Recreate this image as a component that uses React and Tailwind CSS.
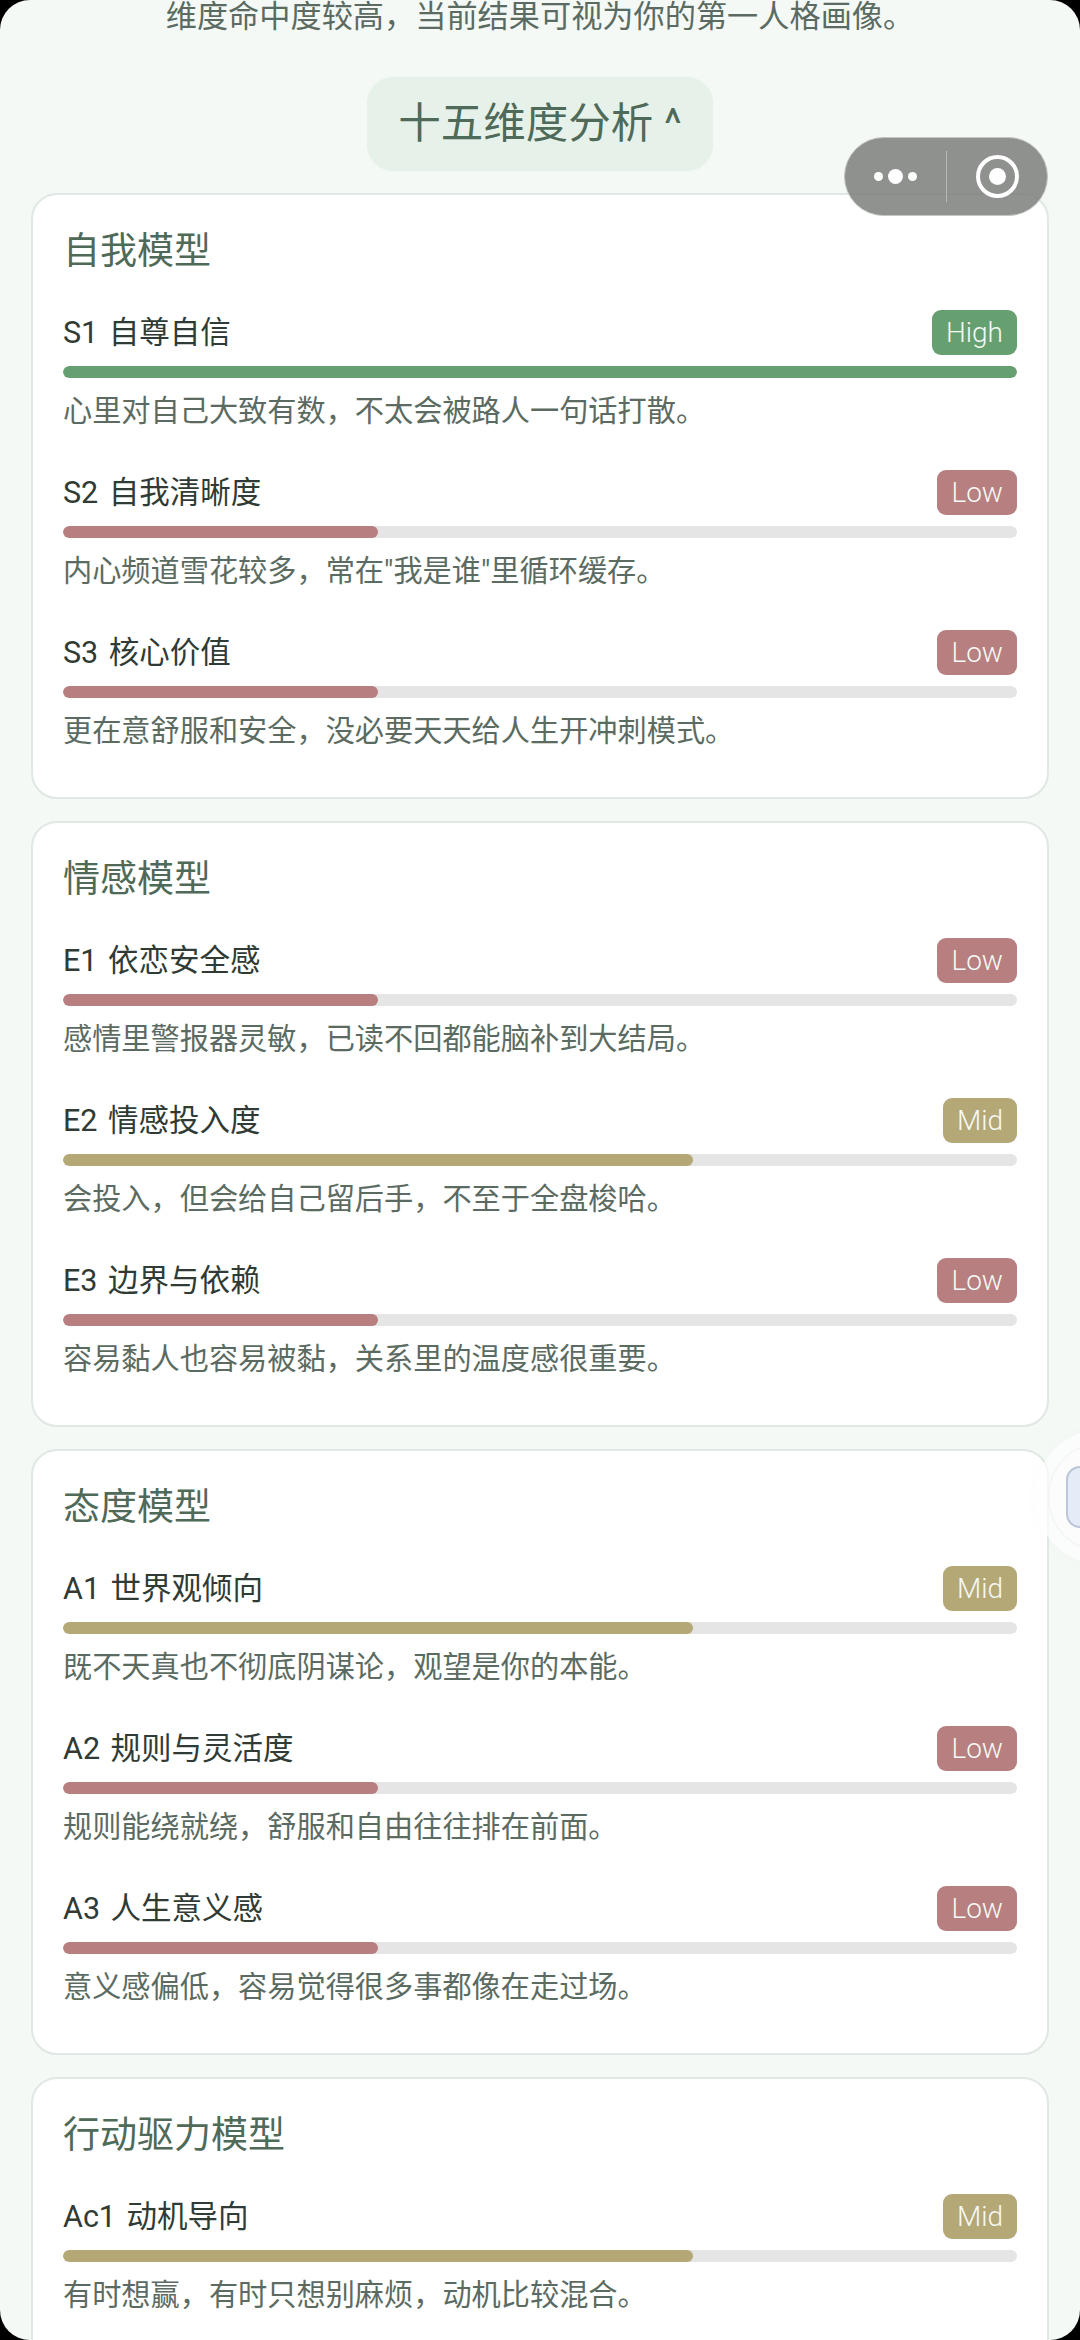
import React from "react";

const CJK = "font-['Roboto','Noto_Sans_CJK_SC',sans-serif]";

const levels = {
  High: { bar: "w-full bg-[#66a070]", badge: "bg-[#66a070]" },
  Mid: { bar: "w-[66%] bg-[#b5a877]", badge: "bg-[#b5a877]" },
  Low: { bar: "w-[33%] bg-[#b77f7f]", badge: "bg-[#b77f7f]" },
};

const models = [
  {
    title: "自我模型",
    rows: [
      { name: "S1 自尊自信", level: "High", desc: "心里对自己大致有数\uFF0C不太会被路人一句话打散。" },
      { name: "S2 自我清晰度", level: "Low", desc: "内心频道雪花较多\uFF0C常在\"我是谁\"里循环缓存。" },
      { name: "S3 核心价值", level: "Low", desc: "更在意舒服和安全\uFF0C没必要天天给人生开冲刺模式。" },
    ],
  },
  {
    title: "情感模型",
    rows: [
      { name: "E1 依恋安全感", level: "Low", desc: "感情里警报器灵敏\uFF0C已读不回都能脑补到大结局。" },
      { name: "E2 情感投入度", level: "Mid", desc: "会投入\uFF0C但会给自己留后手\uFF0C不至于全盘梭哈。" },
      { name: "E3 边界与依赖", level: "Low", desc: "容易黏人也容易被黏\uFF0C关系里的温度感很重要。" },
    ],
  },
  {
    title: "态度模型",
    rows: [
      { name: "A1 世界观倾向", level: "Mid", desc: "既不天真也不彻底阴谋论\uFF0C观望是你的本能。" },
      { name: "A2 规则与灵活度", level: "Low", desc: "规则能绕就绕\uFF0C舒服和自由往往排在前面。" },
      { name: "A3 人生意义感", level: "Low", desc: "意义感偏低\uFF0C容易觉得很多事都像在走过场。" },
    ],
  },
  {
    title: "行动驱力模型",
    rows: [{ name: "Ac1 动机导向", level: "Mid", desc: "有时想赢\uFF0C有时只想别麻烦\uFF0C动机比较混合。" }],
  },
];

const Row = ({ name, level, desc }) => {
  const style = levels[level];
  return (
    <div className="h-[160px]">
      <div className="flex h-[45px] items-center justify-between">
        <span className="text-[30.5px] leading-[45px] font-normal [word-spacing:3px] text-[#2f3b34]">{name}</span>
        <span className={`h-[45px] rounded-[9px] px-[14px] text-[28px] leading-[45px] font-light text-[#f4f9f6] ${style.badge}`}>
          {level}
        </span>
      </div>
      <div className="mt-[11px] h-[12px] overflow-hidden rounded-full bg-[#e5e5e5]">
        <div className={`h-full rounded-full ${style.bar}`} />
      </div>
      <p className="mt-[13px] text-[29.2px] leading-[40px] font-normal whitespace-nowrap text-[#5b6b62]">{desc}</p>
    </div>
  );
};

const Card = ({ title, rows }) => (
  <section className="h-[606px] shrink-0 rounded-[26px] border-2 border-[#dfe8e2] bg-white px-[30px] pt-[32px]">
    <h2 className="text-[37px] leading-[50px] font-normal text-[#4f6a58]">{title}</h2>
    <div className="mt-[33px]">
      {rows.map((row) => (
        <Row key={row.name} {...row} />
      ))}
    </div>
  </section>
);

export default function App() {
  return (
    <div className={`h-[2340px] w-[1080px] overflow-hidden bg-black ${CJK}`}>
      <div className="relative h-full overflow-hidden rounded-[30px] bg-[#f4f9f6]">
        <p className="text-center text-[31.2px] leading-[34px] font-normal text-[#5b6b62]">
          {"维度命中度较高\uFF0C当前结果可视为你的第一人格画像。"}
        </p>

        <div className="mt-[43px] flex justify-center">
          <div className="flex h-[94px] w-[346px] items-center justify-center rounded-[26px] bg-[#e6f1e9] text-[42.5px] font-normal text-[#4f6a58]">
            十五维度分析 ^
          </div>
        </div>

        <div className="mt-[22px] flex flex-col gap-[22px] px-[31px]">
          {models.map((model) => (
            <Card key={model.title} {...model} />
          ))}
        </div>

        {/* mini program capsule */}
        <div className="absolute top-[137px] left-[844px] flex h-[79px] w-[204px] items-center rounded-full border border-[#c4c6c4] bg-[#7d7f7c]/85">
          <div className="flex w-[101px] items-center justify-center gap-[5px]">
            <span className="h-[9px] w-[9px] rounded-full bg-white" />
            <span className="h-[15px] w-[15px] rounded-full bg-white" />
            <span className="h-[9px] w-[9px] rounded-full bg-white" />
          </div>
          <div className="h-[51px] w-px bg-[#b8bab8]" />
          <div className="flex flex-1 items-center justify-center">
            <div className="flex h-[43px] w-[43px] items-center justify-center rounded-full border-[4px] border-white">
              <span className="h-[17px] w-[17px] rounded-full bg-white" />
            </div>
          </div>
        </div>

        {/* floating assistant bubble at the edge */}
        <div className="absolute top-[1442px] left-[1048px] flex h-[110px] w-[110px] items-center rounded-full border border-[#eef2ef] bg-[#fbfcfb] shadow-[0_0_30px_rgba(0,0,0,0.05)] ring-[13px] ring-white/70">
          <div className="ml-[17px] h-[62px] w-[40px] rounded-[14px] border-2 border-[#bcc6d8] bg-[#e4ecf8]" />
        </div>
      </div>
    </div>
  );
}
